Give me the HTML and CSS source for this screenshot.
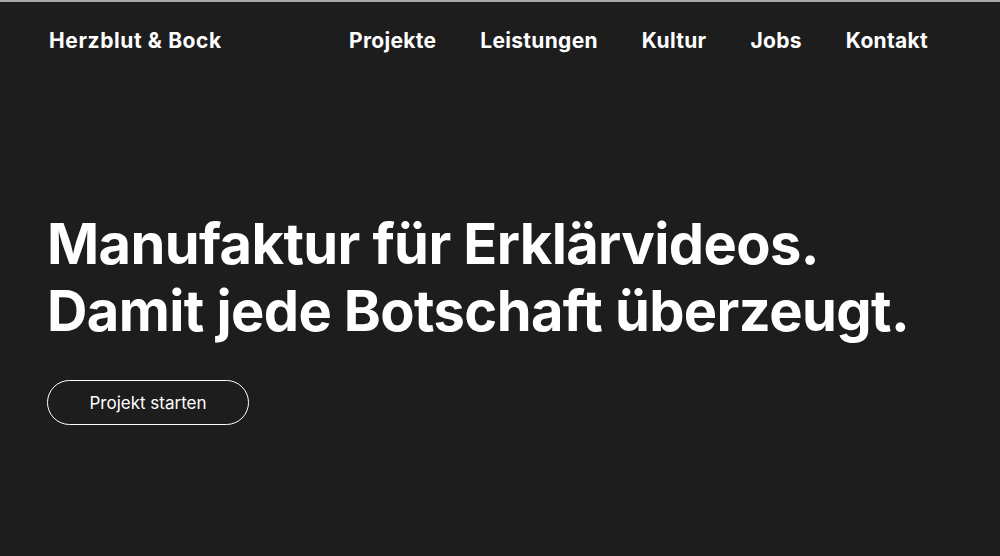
FILE: index.html
```html
<!DOCTYPE html>
<html lang="de">
<head>
  <meta charset="UTF-8">
  <meta name="viewport" content="width=device-width, initial-scale=1">
  <title>Herzblut &amp; Bock | Erklärvideos</title>
  <link rel="stylesheet" href="styles.css">
</head>
<body>

  <header class="kopf">
    <a class="logo" href="#">Herzblut &amp; Bock</a>
    <nav class="menu">
      <a href="#">Projekte</a>
      <a href="#">Leistungen</a>
      <a href="#">Kultur</a>
      <a href="#">Jobs</a>
      <a href="#">Kontakt</a>
    </nav>
  </header>

  <main class="hero">
    <h1>Manufaktur für Erklärvideos.<br>Damit jede Botschaft überzeugt.</h1>
    <a class="boton-projekt" href="#">Projekt starten</a>
  </main>

</body>
</html>
```

FILE: styles.css
```css
* {
  margin: 0;
  padding: 0;
  box-sizing: border-box;
}

html, body {
  height: 100%;
}

body {
  font-family: Inter, 'Noto Sans', sans-serif;
  background-color: #1d1d1d;
  color: #fff;
  border-top: 2px solid #a8a8a8;
  overflow: hidden;
}

a {
  color: inherit;
  text-decoration: none;
}

.kopf {
  display: flex;
  justify-content: space-between;
  align-items: flex-start;
  padding: 26px 72px 0 49px;
  height: 78px;
}

.logo {
  font-size: 21px;
  font-weight: 700;
  letter-spacing: 0.6px;
}

.menu {
  display: flex;
  gap: 44px;
}

.menu a {
  font-size: 21px;
  font-weight: 700;
  letter-spacing: 0.3px;
}

.hero {
  padding: 131px 0 0 47px;
}

.hero h1 {
  font-size: 56px;
  font-weight: 700;
  line-height: 67px;
  letter-spacing: -0.6px;
}

.boton-projekt {
  display: inline-flex;
  align-items: center;
  justify-content: center;
  margin-top: 35px;
  width: 202px;
  height: 45px;
  border: 1.5px solid #fff;
  border-radius: 23px;
  font-size: 17px;
  font-weight: 400;
}
```
